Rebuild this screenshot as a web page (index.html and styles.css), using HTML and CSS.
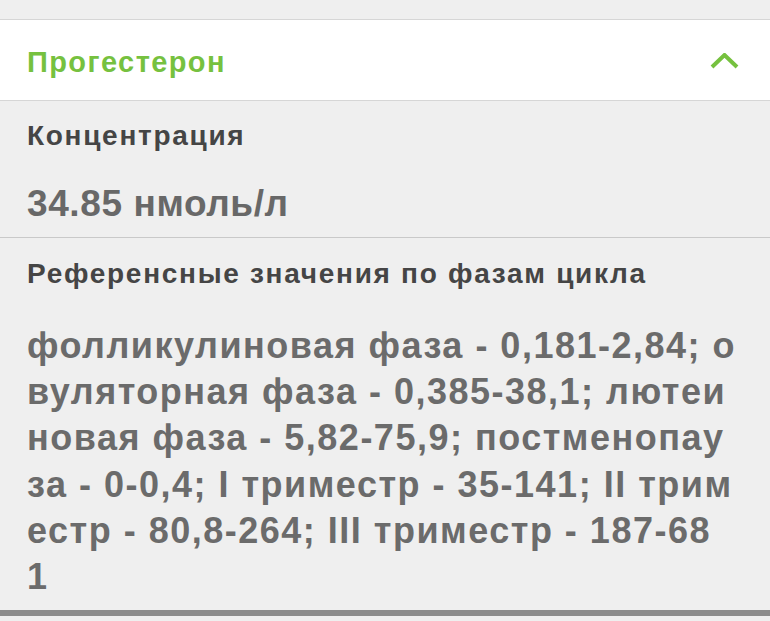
FILE: index.html
```html
<!DOCTYPE html>
<html lang="ru">
<head>
<meta charset="utf-8">
<title>Прогестерон</title>
<link rel="stylesheet" href="styles.css">
</head>
<body>
<div class="top-strip"></div>
<section class="panel">
  <header class="panel-header">
    <h2 class="panel-title">Прогестерон</h2>
    <svg class="chevron" width="29" height="16" viewBox="0 0 29 16" aria-hidden="true">
      <polyline points="2,14 14.5,2 27,14" fill="none" stroke="#76c13f" stroke-width="4" stroke-linecap="butt" stroke-linejoin="miter"/>
    </svg>
  </header>
  <div class="field field-concentration">
    <div class="field-label">Концентрация</div>
    <div class="field-value">34.85 нмоль/л</div>
  </div>
  <div class="field field-reference">
    <div class="field-label">Референсные значения по фазам цикла</div>
    <p class="field-text">фолликулиновая фаза - 0,181-2,84; овуляторная фаза - 0,385-38,1; лютеиновая фаза - 5,82-75,9; постменопауза - 0-0,4; I триместр - 35-141; II триместр - 80,8-264; III триместр - 187-68<br>1</p>
  </div>
</section>
</body>
</html>
```

FILE: styles.css
```css
html, body {
  margin: 0;
  padding: 0;
  background: #efefef;
  font-family: "Liberation Sans", Arial, sans-serif;
}

.top-strip {
  height: 19px;
  background: #efefef;
  border-bottom: 1px solid #d6d6d6;
}

.panel {
  background: #efefef;
  border-bottom: 6px solid #8c8c8c;
}

.panel-header {
  height: 80px;
  background: #ffffff;
  border-bottom: 1px solid #d6d6d6;
  display: flex;
  align-items: center;
  justify-content: space-between;
  padding: 0 31px 0 27px;
}

.panel-title {
  margin: 4px 0 0;
  font-size: 29px;
  line-height: 30px;
  font-weight: bold;
  letter-spacing: 1.4px;
  color: #76c13f;
}

.chevron {
  display: block;
  margin-top: 2px;
}

.field {
  padding: 0 29px 0 27px;
}

.field-concentration {
  padding-top: 19px;
  padding-bottom: 11px;
  border-bottom: 1px solid #c9c9c9;
}

.field-reference {
  padding-top: 20px;
  padding-bottom: 10px;
}

.field-label {
  font-size: 28px;
  line-height: 32px;
  font-weight: bold;
  letter-spacing: 1.7px;
  color: #454545;
}

.field-value {
  margin-top: 30px;
  font-size: 37px;
  line-height: 44px;
  font-weight: bold;
  letter-spacing: 0.6px;
  color: #686868;
}

.field-text {
  margin: 33px 0 0;
  font-size: 36px;
  line-height: 46.2px;
  font-weight: bold;
  letter-spacing: 1.5px;
  color: #6b6b6b;
  word-break: break-all;
}
```
